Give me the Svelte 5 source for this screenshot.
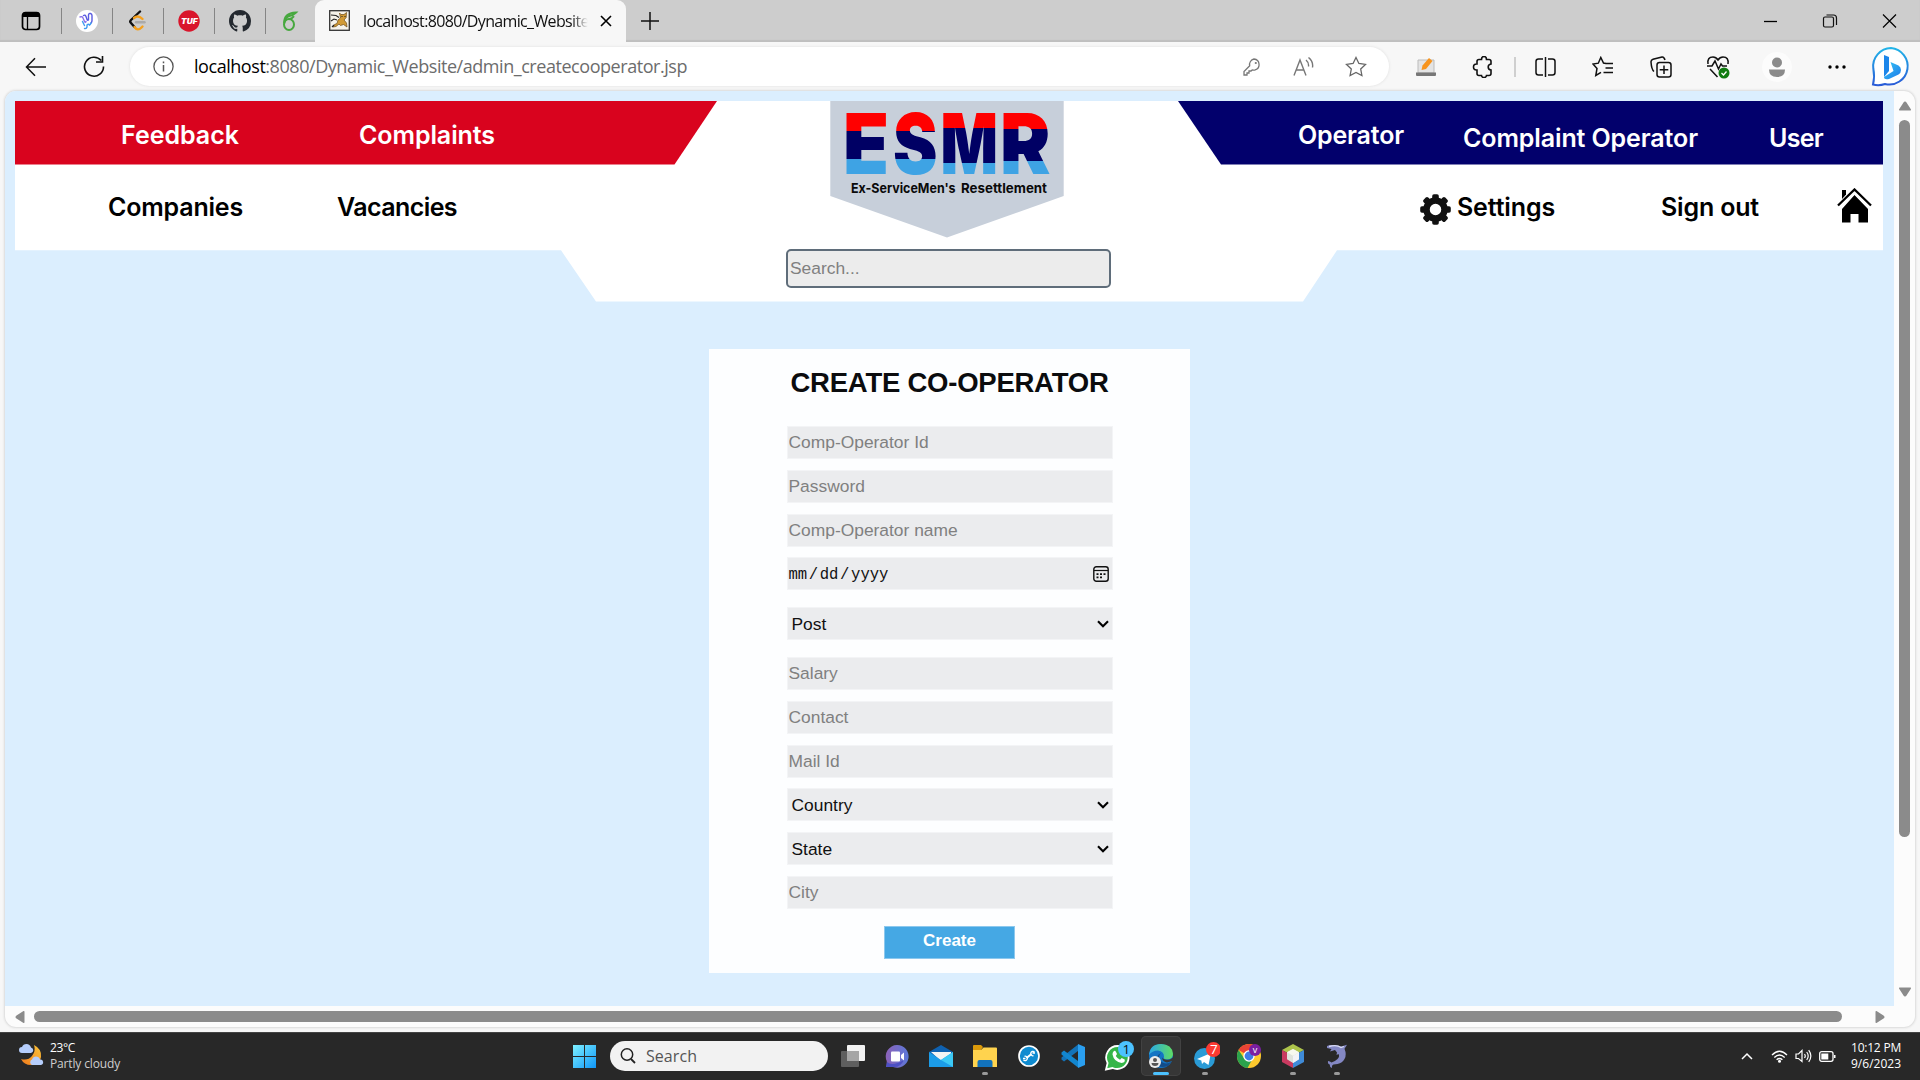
<script>
  // Spreads a label's letters so that its advance width is `width` pixels.
  function fit(node, width) {
    const natural = node.getBoundingClientRect().width;
    const count = node.textContent.length;
    node.style.letterSpacing = `${(width - natural) / count}px`;
  }

  const fields = [
    { kind: 'text', label: 'Comp-Operator Id' },
    { kind: 'text', label: 'Password' },
    { kind: 'text', label: 'Comp-Operator name' },
    { kind: 'date' },
    { kind: 'select', label: 'Post', spaced: true },
    { kind: 'text', label: 'Salary' },
    { kind: 'text', label: 'Contact' },
    { kind: 'text', label: 'Mail Id' },
    { kind: 'select', label: 'Country' },
    { kind: 'select', label: 'State' },
    { kind: 'text', label: 'City' }
  ];

  const letters = [
    { ch: 'E', x: 13, w: 46, a: 131.3, b: 158.7 },
    { ch: 'S', x: 63, w: 44.5, a: 131.3, b: 159.3 },
    { ch: 'M', x: 110.5, w: 57.5, a: 128.3, b: 162.7 },
    { ch: 'R', x: 170, w: 50.5, a: 129.3, b: 161 }
  ];
  const teeth = [0, 45, 90, 135, 180, 225, 270, 315];
</script>

<div class="screen">
  <div class="tabs">
    <div class="pin first">
      <svg width="20" height="20" viewBox="0 0 20 20"><rect x="1.5" y="1.5" width="17" height="17" rx="3" fill="none" stroke="#000" stroke-width="1.7"/><path d="M1.5 6V4a3 3 0 0 1 3-3h11a3 3 0 0 1 3 3v2z"/><path d="M6.5 6v12" stroke="#000" stroke-width="1.3"/></svg>
    </div>
    <div class="pin">
      <svg width="22" height="22" viewBox="0 0 22 22"><circle cx="11" cy="11" r="11" fill="#fff"/><g fill="none" stroke-width="1.400" stroke-linecap="round"><path d="M4 7q2-1 3 1l1.500 3.500q1 1.500 1.500 0" stroke="#8a72ea"/><path d="M7.500 5.500q1.500-1 2.500 1l1 3q1 1.500 1.500 0V5q.5-2 2-1.500T16 5.500v5q0 1.500-1 2.500" stroke="#5a5be0"/><path d="M6.500 11.500l2 4M8.500 18.500q2 .5 2.500-1.500v-2q1.500-1.500 2.500 0 1-.5 1.500-2" stroke="#3f9bef"/></g></svg>
    </div>
    <div class="pin">
      <svg width="22" height="22" viewBox="0 0 22 22"><g fill="none" stroke-width="2.400" stroke-linecap="round"><path d="M13 1.500 4 10q-1.500 1.500 0 3l3.500 4" stroke="#111"/><path d="M7.500 17q3 4.500 7 .5l1-1M7 8q4-3.500 8.500 1" stroke="#f5a01c"/><path d="M9 12.300h8.500" stroke="#aaa"/></g></svg>
    </div>
    <div class="pin">
      <svg width="22" height="22" viewBox="0 0 22 22"><circle cx="11" cy="11" r="10.700" fill="#d9152b"/><text x="3" y="13.500" textLength="16.500" lengthAdjust="spacingAndGlyphs" class="tuf">TUF</text></svg>
    </div>
    <div class="pin">
      <svg width="22" height="22" viewBox="0 0 16 16"><path fill="#24292f" d="M8 0C3.580 0 0 3.580 0 8c0 3.540 2.290 6.530 5.470 7.590.4.070.55-.17.55-.38 0-.19-.01-.82-.01-1.490-2.010.37-2.530-.49-2.690-.94-.09-.23-.48-.94-.82-1.130-.28-.15-.68-.52-.01-.53.63-.01 1.080.58 1.230.82.72 1.210 1.870.87 2.330.66.07-.52.28-.87.51-1.070-1.780-.2-3.640-.89-3.640-3.950 0-.87.31-1.590.82-2.150-.08-.2-.36-1.020.08-2.120 0 0 .67-.21 2.200.82.64-.18 1.320-.27 2-.27s1.360.09 2 .27c1.530-1.040 2.200-.82 2.200-.82.44 1.100.16 1.920.08 2.120.51.56.82 1.270.82 2.150 0 3.070-1.870 3.750-3.650 3.950.29.25.54.73.54 1.480 0 1.070-.01 1.930-.01 2.200 0 .21.15.46.55.38A8.010 8.010 0 0 0 16 8c0-4.420-3.580-8-8-8"/></svg>
    </div>
    <div class="pin last">
      <svg width="20" height="22" viewBox="0 0 20 22"><g fill="none" stroke="#47a83f" stroke-width="2"><ellipse cx="8" cy="14.500" rx="5" ry="5.500"/><path d="M3.200 13.500Q2.500 3 15 2.500q-3 3-6 3.200-5 1.300-5.800 7.800M8 9.300q3.500-.8 5-3"/></g></svg>
    </div>
    <div class="tab">
      <svg class="fav" width="21" height="21" viewBox="0 0 21 21"><rect x=".7" y=".7" width="19.600" height="19.600" fill="#f5f2ea" stroke="#333" stroke-width="1.300"/><path d="M10.500 3 12 4.500h3l2.500-2-.3 5L15 10l2.500 3 .5 4-3.500-2.500-3 1-1.500-1.500-3 2.500-3 .5 1.500-2.500 2.500-1L9 10l2.500-2z" fill="#d19a35" stroke="#6b4a18" stroke-width=".7"/><path d="M2 5l5 .5 3 2M2 11l3-2 3 1M3 17l2-2M12.500 6.500h1M15.500 6.500h1" stroke="#222" stroke-width="1.100" fill="none"/></svg>
      <div class="tabtitle"><span use:fit={231}>localhost:8080/Dynamic_Website/</span></div>
      <svg class="x" width="12" height="12" viewBox="0 0 12 12"><path d="M1 1l10 10M11 1 1 11" stroke="#000" stroke-width="1.600"/></svg>
    </div>
    <svg class="plus" width="18" height="18" viewBox="0 0 18 18"><path d="M9 0v18M0 9h18" stroke="#111" stroke-width="1.500"/></svg>
    <div class="winctl">
      <svg width="60" height="14" viewBox="0 0 60 14"><path d="M24 7.500h13" stroke="#000" stroke-width="1.300"/></svg>
      <svg width="60" height="14" viewBox="0 0 60 14"><g fill="none" stroke="#111" stroke-width="1.200"><rect x="23.500" y="3" width="10" height="10" rx="1.500"/><path d="M26.500 1h7q3 0 3 3v7"/></g></svg>
      <svg width="60" height="14" viewBox="0 0 60 14"><path d="M23 .5l13 13M36 .5l-13 13" stroke="#000" stroke-width="1.200"/></svg>
    </div>
  </div>

  <div class="toolbar">
    <div class="navslot"><svg width="22" height="20" viewBox="0 0 22 20"><path d="M21 10H1.500M10 1.300 1.500 10l8.500 8.700" fill="none" stroke="#111" stroke-width="1.500"/></svg></div>
    <div class="navslot"><svg width="22" height="22" viewBox="0 0 22 22"><path d="M20.500 10.500a9.500 9.500 0 1 1-2.300-6M19.500 0v6H13" fill="none" stroke="#111" stroke-width="1.600"/></svg></div>
    <div class="omni">
      <svg class="info" width="21" height="21" viewBox="0 0 21 21"><circle cx="10.500" cy="10.500" r="9.600" fill="none" stroke="#555" stroke-width="1.300"/><path d="M10.500 9v6.500M10.500 5.500v1.800" stroke="#555" stroke-width="1.500"/></svg>
      <div class="url"><span use:fit={493}><b>localhost</b>:8080/Dynamic_Website/admin_createcooperator.jsp</span></div>
      <div class="slot52"><svg width="18" height="18" viewBox="0 0 18 18"><path d="M11 1a5.600 5.600 0 0 1 1.200 10.900 6 6 0 0 1-3 0L8 13H6v2H4v2H1v-3.500l5.700-5.700A5.600 5.600 0 0 1 11 1z" fill="none" stroke="#777" stroke-width="1.300"/><circle cx="12.800" cy="5" r="1.100" fill="#777"/></svg></div>
      <div class="slot52"><svg width="22" height="20" viewBox="0 0 22 20"><path d="M1 18.500 7 3l6 15.500M3 13h8M13 3q3 2.500 2.500 6.500M15.500.5q5 4 4 10" fill="none" stroke="#777" stroke-width="1.400"/></svg></div>
      <div class="slot52"><svg width="22" height="22" viewBox="0 0 22 22"><path d="M11 1.500l2.900 6 6.600.9-4.800 4.600 1.200 6.500-5.900-3.100-5.900 3.100 1.200-6.500L1.500 8.400l6.600-.9z" fill="none" stroke="#666" stroke-width="1.300"/></svg></div>
    </div>
    <div class="tools">
      <div><svg width="22" height="20" viewBox="0 0 22 20"><path d="M3 3h16v13H3z" fill="#e4e4e4" stroke="#bbb"/><path d="M1 15.500h20V18q0 1-1 1H2q-1 0-1-1z" fill="#777"/><path d="M6.500 13l1-4.500L14 1l3.500 3-6.500 8z" fill="#f7941d"/></svg></div>
      <div><svg width="22" height="22" viewBox="0 0 22 22"><path d="M7 3.500h2.500q0-3 2.500-3t2.500 3H17q2 0 2 2V8q-2.800.3-2.800 3T19 14v3.500q0 2-2 2h-2.500q-.3 2-2.500 2t-2.500-2H7q-2 0-2-2V14q-3.500.3-3.500-3T5 8V5.500q0-2 2-2z" fill="none" stroke="#111" stroke-width="1.600"/></svg></div>
      <i></i>
      <div><svg width="21" height="20" viewBox="0 0 21 20"><path d="M8 2H3.500Q1 2 1 4.500v11Q1 18 3.500 18H8M13 2h4.500Q20 2 20 4.500v11q0 2.500-2.500 2.500H13M10.500 0v20" fill="none" stroke="#111" stroke-width="1.500"/></svg></div>
      <div><svg width="22" height="22" viewBox="0 0 22 22"><path d="M14 7.500 11.500 7 8.800 1.500l-2.500 5.700-5.300.9 4 4.400-1.200 7L9 16.300M12.500 7.500H21M13.500 12H21M11.500 16.500H21" fill="none" stroke="#111" stroke-width="1.500"/></svg></div>
      <div><svg width="22" height="22" viewBox="0 0 22 22"><path d="M4 15.500Q1.500 13.500 1 6q-.2-2 2-2.700L12 1q2-.4 3 3" fill="none" stroke="#111" stroke-width="1.500"/><rect x="7" y="6.500" width="14" height="14.500" rx="2.500" fill="#f7f7f7" stroke="#111" stroke-width="1.500"/><path d="M14 9.500v8.500M9.700 13.700h8.600" stroke="#111" stroke-width="1.500"/></svg></div>
      <div><svg width="24" height="24" viewBox="0 0 24 24"><path d="M2 9Q1 2 7 2q3 0 5 3 2-3 5-3 6 0 5 7M1 11h5l3-5 3.500 8 2.500-5 1.500 2H21M4 14l7.500 8" fill="none" stroke="#111" stroke-width="1.500"/><circle cx="18" cy="18" r="5.500" fill="#107c10"/><path d="M15.500 18l2 2 3-3.500" fill="none" stroke="#fff" stroke-width="1.300"/></svg></div>
      <div class="w60"><svg width="30" height="30" viewBox="0 0 30 30"><circle cx="15" cy="15" r="15" fill="#fcfcfc"/><circle cx="15" cy="10.500" r="5" fill="#8b8b8b"/><path d="M7 17.500h16q0 7.500-8 7.500t-8-7.500z" fill="#8b8b8b"/></svg></div>
      <div class="w60"><svg width="18" height="4" viewBox="0 0 18 4"><circle cx="2" cy="2" r="1.700"/><circle cx="9" cy="2" r="1.700"/><circle cx="16" cy="2" r="1.700"/></svg></div>
      <div class="w48"><svg width="40" height="42" viewBox="0 0 40 42">
        <defs><linearGradient id="ring" x1="0" y1="0" x2="0" y2="1"><stop offset="0" stop-color="#21b4e8"/><stop offset="1" stop-color="#2a5bd7"/></linearGradient><linearGradient id="bee" x1="0" y1="0" x2="1" y2="1"><stop offset="0" stop-color="#35c6f4"/><stop offset="1" stop-color="#1f7bea"/></linearGradient></defs>
        <path d="M20 2a18.300 18.300 0 1 1-6 36Q8 40 2 38.500q2-8 .3-16A18.300 18.300 0 0 1 20 2z" fill="#fff" stroke="url(#ring)" stroke-width="2"/><path d="M13 9l5 2v14l-5 6z" fill="#1c86ea"/><path d="M19.500 16l8 3.500q2.500 1.500 2.500 4.500 0 3-2.500 4.500L18 33q-5 1-5-2l9.500-6z" fill="url(#bee)"/></svg></div>
    </div>
  </div>

  <div class="view">
    <div class="page">
      <header>
        <svg class="shape" width="1868" height="201" viewBox="15 101 1868 201">
          <path d="M15 101H1883V250.300H1337L1303 301.500H596L561 250.300H15z" fill="#fff"/>
          <path d="M15 101H717L674.500 164.500H15z" fill="#d9031e"/>
          <path d="M1178 101H1883V164.500H1221z" fill="#02006c"/>
        </svg>
        <svg class="logo" width="234" height="137" viewBox="0 101 234 137">
          <defs>
            {#each letters as l}
              <linearGradient id={'g' + l.ch} gradientUnits="userSpaceOnUse" x1="0" y1="101" x2="0" y2="201">
                <stop offset={(l.a - 101) / 100} stop-color="#f00"/><stop offset={(l.a - 101) / 100} stop-color="#000064"/>
                <stop offset={(l.b - 101) / 100} stop-color="#000064"/><stop offset={(l.b - 101) / 100} stop-color="#3ea3e4"/>
              </linearGradient>
            {/each}
          </defs>
          <path d="M.3 101H233.700V196L117 237.500.3 196z" fill="#c7cfda"/>
          {#each letters as l}
            <text class="big" x={l.x} y="173.700" textLength={l.w} lengthAdjust="spacingAndGlyphs" fill={`url(#g${l.ch})`}>{l.ch}</text>
          {/each}
          <text class="tag" x="21" y="192.500" textLength="104.500" lengthAdjust="spacingAndGlyphs">Ex-ServiceMen's</text>
          <text class="tag" x="131" y="192.500" textLength="86" lengthAdjust="spacingAndGlyphs">Resettlement</text>
        </svg>
        <nav class="row top">
          <a class="n1"><span use:fit={118}>Feedback</span></a>
          <a class="n2"><span use:fit={136}>Complaints</span></a>
          <a class="n3"><span use:fit={106}>Operator</span></a>
          <a class="n4"><span use:fit={235}>Complaint Operator</span></a>
          <a class="n5"><span use:fit={54}>User</span></a>
        </nav>
        <nav class="row bottom">
          <a class="m1"><span use:fit={135}>Companies</span></a>
          <a class="m2"><span use:fit={120}>Vacancies</span></a>
          <svg class="gear" width="31" height="31" viewBox="-15.500 -15.500 31 31"><circle r="9" fill="none" stroke="#111" stroke-width="6.500"/>{#each teeth as t}<rect x="-3.300" y="-15.300" width="6.600" height="7" rx="1.800" fill="#111" transform={`rotate(${t})`}/>{/each}</svg>
          <a class="m3"><span use:fit={98}>Settings</span></a>
          <a class="m4"><span use:fit={98}>Sign out</span></a>
          <svg class="house" width="35" height="35" viewBox="0 0 35 35"><path d="M5 2h4v4.500L5 11z"/><path d="M17.500 7 31 21v13.500H21.500V26h-8v8.500H5V21z"/><path d="M1 17.500 17.500 1.500 34 17.500" fill="none" stroke="#000" stroke-width="2.300"/><path d="M3 19.700 17.500 5.500 32 19.700" fill="none" stroke="#fff" stroke-width="1.400"/></svg>
        </nav>
        <input class="search" placeholder="Search..." />
      </header>

      <form class="card">
        <h1><span use:fit={318}>CREATE CO-OPERATOR</span></h1>
        <div class="fields">
          {#each fields as f}
            {#if f.kind === 'text'}
              <input class="field" placeholder={f.label} />
            {:else if f.kind === 'date'}
              <div class="field date"><span>mm</span><span>/</span><span>dd</span><span>/</span><span>yyyy</span>
                <svg width="16" height="16" viewBox="0 0 16 16"><rect x=".8" y=".8" width="14.400" height="14.400" rx="2.500" fill="none" stroke="#111" stroke-width="1.400"/><path d="M1 4.500h14" stroke="#111" stroke-width="1.200"/><path d="M3.500 8.200h2M7 8.200h2M10.500 8.200h2M3.500 11.300h2M7 11.300h2" stroke="#111" stroke-width="1.800"/></svg>
              </div>
            {:else}
              <div class="field select" class:spaced={f.spaced}>{f.label}
                <svg width="12" height="8" viewBox="0 0 12 8"><path d="M1 1.300l5 5 5-5" fill="none" stroke="#000" stroke-width="2.100"/></svg>
              </div>
            {/if}
          {/each}
        </div>
        <button type="button">Create</button>
      </form>
    </div>

    <div class="vbar">
      <svg width="14" height="10" viewBox="0 0 14 10"><path d="M7 .5q1 0 1.500 1l4.500 7q.3 1-.7 1H1.700q-1 0-.7-1l4.500-7Q6 .5 7 .5z" fill="#8b8b8b"/></svg>
      <b></b>
      <svg width="14" height="10" viewBox="0 0 14 10"><path d="M7 9.500q1 0 1.500-1l4.500-7q.3-1-.7-1H1.700q-1 0-.7 1l4.500 7q.5 1 1.500 1z" fill="#8b8b8b"/></svg>
    </div>
    <div class="hbar">
      <svg width="10" height="14" viewBox="0 0 10 14"><path d="M.5 7q0-1 1-1.500l7-4.500q1-.3 1 .7v10.600q0 1-1 .7l-7-4.500Q.5 8 .5 7z" fill="#8b8b8b"/></svg>
      <b></b>
      <svg width="10" height="14" viewBox="0 0 10 14"><path d="M9.500 7q0-1-1-1.500l-7-4.500q-1-.3-1 .7v10.600q0 1 1 .7l7-4.500q1-.5 1-1.500z" fill="#8b8b8b"/></svg>
    </div>
  </div>

  <div class="taskbar">
    <svg class="weather" width="25" height="24" viewBox="0 0 25 24"><defs><linearGradient id="mo" x1="1" y1="0" x2="0" y2="1"><stop offset="0" stop-color="#fbc53a"/><stop offset="1" stop-color="#f07a1c"/></linearGradient></defs><path d="M15 2q8 4 7 12t-10 8q-7 0-10-6 7 2 11-3t2-11z" fill="url(#mo)"/><path d="M3 10a3 3 0 0 1 0-6Q4 1 7.500 1T12 4.500a2.800 2.800 0 0 1 0 5.500zM13 22a3 3 0 0 1 0-5.500q1-3 4-3t4 3a2.800 2.800 0 0 1 1 5.500z" fill="#b5cdfb"/></svg>
    <div class="wtext"><span use:fit={25}>23°C</span><span class="dim" use:fit={70}>Partly cloudy</span></div>
    <svg class="start" width="23" height="23" viewBox="0 0 23 23"><defs><linearGradient id="st" gradientUnits="userSpaceOnUse" x1="0" y1="0" x2="23" y2="23"><stop offset="0" stop-color="#7df0ff"/><stop offset="1" stop-color="#0f96f8"/></linearGradient></defs><path d="M0 0h11v11H0zM12 0h11v11H12zM0 12h11v11H0zM12 12h11v11H12z" fill="url(#st)"/></svg>
    <div class="tsearch"><svg width="16" height="16" viewBox="0 0 16 16"><circle cx="7" cy="6.500" r="5.700" fill="none" stroke="#222" stroke-width="1.500"/><path d="M11 11l4 4" stroke="#222" stroke-width="1.800"/></svg><span use:fit={51}>Search</span></div>
    <div class="apps">
      <div><svg width="26" height="26" viewBox="0 0 26 26"><rect x="7" y="2" width="18" height="16" rx="1" fill="#f2f2f2"/><rect x="1" y="8" width="18" height="16" rx="1" fill="#5f5f5f"/><rect x="7" y="8" width="12" height="10" fill="#a5a5a5"/></svg></div>
      <div><svg width="24" height="24" viewBox="0 0 24 24"><defs><linearGradient id="ch" x1="0" y1="0" x2="1" y2="0"><stop offset="0" stop-color="#8c62b8"/><stop offset="1" stop-color="#5c78d8"/></linearGradient></defs><path d="M12 1a11.400 11.400 0 1 1-4 22H1q1-2 .7-6A11.400 11.400 0 0 1 12 1z" fill="url(#ch)"/><path d="M2 18q5 5 17-2-4 8-11 7H1z" fill="#4d50c4"/><rect x="6" y="7.500" width="9" height="10" rx="1" fill="#fff"/><path d="M16 11l3-2.500v8L16 14z" fill="#fff"/></svg></div>
      <div><svg width="24" height="24" viewBox="0 0 24 24"><path d="M0 8 12 1l12 7v7H0z" fill="#0f61b0"/><path d="M2 8h20v7l-10 2z" fill="#f4f4f4"/><path d="M0 8l12 8 12-8v15H0z" fill="#1c9ce8"/><path d="M24 8v15L12 16z" fill="#3cc9f5"/></svg></div>
      <div class="run"><svg width="24" height="24" viewBox="0 0 24 24"><path d="M0 2q0-1 1-1h7l2 2-2 3H0z" fill="#dc9a0a"/><path d="M0 6h8l2.500-2.500H23q1 0 1 1V23H0z" fill="#ffd34e"/><path d="M4.500 23v-5q0-2 2-2h11q2 0 2 2v5z" fill="#1272bb"/></svg></div>
      <div><svg width="22" height="22" viewBox="0 0 22 22"><circle cx="11" cy="11" r="10" fill="#0f8bd0" stroke="#fff" stroke-width="1.700"/><path d="M8.500 13l5-4" stroke="#fff" stroke-width="2"/><path d="M5 13.500h2.500M5.500 14.800a2.200 2.200 0 1 0 1-3.500M17 8h-2.500M16.500 7a2.200 2.200 0 1 0-1 3.700" fill="none" stroke="#fff" stroke-width="1.300"/></svg></div>
      <div><svg width="24" height="24" viewBox="0 0 24 24"><path d="M17 .5V7L3 17.500.5 15.500v-2z" fill="#1373b9"/><path d="M17 23.500V17L3 6.500.5 8.500v2z" fill="#1286cf"/><path d="M17 0l7 3v18l-7 3z" fill="#2a9ff0"/></svg></div>
      <div><svg class="wa" width="30" height="30" viewBox="0 0 30 30"><path d="M14 5a11.500 11.500 0 1 1-5.500 22L2 28.500 3.600 22A11.500 11.500 0 0 1 14 5z" fill="#35b548" stroke="#fff" stroke-width="1.800"/><path d="M9.500 10.500q1.500-1.500 2.500.5l1 2-1.200 2q1.500 2.500 4.200 3.700l1.700-1.700 3 1.500q.7 3-3 3.500Q10 21 8.500 13.500q0-2 1-3z" fill="#fff"/><circle cx="22" cy="8" r="8" fill="#4cc2ff"/><text class="badge" x="18.500" y="13" fill="#111">1</text></svg></div>
      <div class="active"><svg width="26" height="26" viewBox="0 0 26 26"><defs><linearGradient id="ed" x1="0" y1="0" x2="1" y2="0"><stop offset="0" stop-color="#2aa7e8"/><stop offset="1" stop-color="#5fdc62"/></linearGradient></defs><circle cx="13" cy="13" r="12" fill="#1374c4"/><path d="M1 12Q2 1 13 1t12 10q0 5-6 5.500-4 0-3-3 0-5-6-6-6 0-9 4.500z" fill="url(#ed)"/><path d="M13 10q-4 4 0 8.500 5 4 10.500 0L20 23q-9 3-12-3-1-7 5-10z" fill="#134c88"/><path d="M14 14q1 3.500 8 2.500l3-2 1 3-7 2q-5-1-5-5.500z" fill="#383736"/><circle cx="7" cy="19" r="6" fill="#ececec"/><circle cx="7" cy="17" r="2" fill="#555"/><path d="M3.500 20h7q0 3-3.500 3t-3.500-3z" fill="#555"/></svg></div>
      <div class="run"><svg width="30" height="30" viewBox="0 0 30 30"><circle cx="14.500" cy="17.500" r="10.500" fill="#2a9bd6"/><path d="M7 18l14-6-2.500 12-4.500-3-2 2-.7-3.500z" fill="#fff"/><circle cx="23.500" cy="8.500" r="7.500" fill="#fb3a32"/><text class="badge" x="20" y="13" fill="#fff">7</text></svg></div>
      <div><svg width="26" height="26" viewBox="0 0 26 26"><circle cx="13" cy="13" r="12" fill="#fdc92e"/><path d="M13 13 2.600 7A12 12 0 0 1 23.500 7z" fill="#ea4335"/><path d="M2.600 7A12 12 0 0 0 11.500 25l5-9-8 0z" fill="#2ba24c"/><circle cx="13" cy="13" r="5.700" fill="#fff"/><circle cx="13" cy="13" r="4.400" fill="#3f7de8"/><circle cx="19" cy="7" r="6" fill="#7b1fa2"/><text class="vee" x="16.700" y="10">v</text></svg></div>
      <div class="run"><svg width="22" height="24" viewBox="0 0 22 24"><path d="M11 0l11 6-11 6L0 6z" fill="#adc44b"/><path d="M0 6l11 6v12L0 18z" fill="#c93a60"/><path d="M22 6l-11 6v12l11-6z" fill="#3f8bd8"/><path d="M11 5l6 3.300v7L11 19l-6-3.700v-7z" fill="#dfe3dc"/><path d="M5 8.300 11 5l6 3.300-6 3.500z" fill="#f7f8ee"/><path d="M11 12v7l6-3.700v-7z" fill="#f3f3f8"/></svg></div>
      <div class="run"><svg width="22" height="24" viewBox="0 0 22 24"><path d="M1 2q3-1.500 6-1 5 .2 8 1.500L21 .8l-2.500 4Q21 11 18.500 15q-2 4-7 5l-4 .5Q5.500 21 6 24q-2.500-1-2.300-3.500Q1.500 20 2 17q2 0 3.500 1.500Q9 17.500 11.500 15t1-5l-2 1 .5-2.500L9 6 4 7.500 5.500 5 1 4z" fill="#8488c4"/><path d="M3 2.500q8-2 12 1l3-1" stroke="#dadcf4" stroke-width="1.300" fill="none"/></svg></div>
    </div>
    <div class="tray">
      <svg width="12" height="8" viewBox="0 0 12 8"><path d="M1 7l5-5 5 5" fill="none" stroke="#fff" stroke-width="1.500"/></svg>
      <svg class="wifi" width="17" height="13" viewBox="0 0 17 13"><g fill="none" stroke="#fff" stroke-width="1.300"><path d="M1 5q7.500-7.500 15 0M3.300 7.500q5.200-5 10.400 0M5.600 9.800q2.900-2.600 5.800 0"/></g><circle cx="8.500" cy="11.300" r="1.500" fill="#fff"/></svg>
      <svg class="vol" width="17" height="14" viewBox="0 0 17 14"><path d="M1 5h2.500L7 1.500v11L3.500 9.500H1zM9.500 5q1.500 2 0 4M11.700 3q3 4 0 8M13.700 1.200q4.300 5.800 0 11.600" fill="none" stroke="#fff" stroke-width="1.200"/></svg>
      <svg class="bat" width="17" height="11" viewBox="0 0 17 11"><rect x=".7" y=".7" width="13.300" height="9.600" rx="2" fill="none" stroke="#fff" stroke-width="1.300"/><path d="M2.300 2.500h7v6h-7zM15 4h1.500v3H15z" fill="#fff"/></svg>
      <div class="clock"><span use:fit={50}>10:12 PM</span><span use:fit={50}>9/6/2023</span></div>
    </div>
  </div>
</div>

<style>
  :global(body) { margin: 0; overflow: hidden; }
  * { box-sizing: border-box; }
  svg { display: block; flex: none; }
  span { white-space: nowrap; display: inline-block; }
  .screen { width: 1920px; height: 1080px; background: #f7f7f7; display: flex; flex-direction: column; font-family: "Open Sans", "Noto Sans", sans-serif; overflow: hidden; }

  .tabs { height: 42px; background: #cdcdcd; display: flex; flex: none; align-items: center; box-shadow: inset 0 -2px 1px #bfbfbf; padding-bottom: 1px; }
  .pin { width: 51px; height: 26px; display: flex; align-items: center; justify-content: center; border-right: 1px solid #858585; }
  .first { width: 62px; }
  .last { width: 49px; border: 0; }
  .tab { width: 311px; height: 42px; margin-bottom: -1px; background: #f7f7f7; border-radius: 9px 9px 0 0; display: flex; align-items: center; padding: 0 0 1px 14px; }
  .tabtitle { width: 227px; margin-left: 13px; overflow: hidden; font-size: 16px; line-height: 24px; color: #111; -webkit-mask-image: linear-gradient(90deg, #000 92%, transparent 99%); mask-image: linear-gradient(90deg, #000 92%, transparent 99%); }
  .x { margin-left: 10px; }
  .plus { margin-left: 15px; }
  .winctl { margin-left: auto; display: flex; }

  .toolbar { height: 49px; flex: none; display: flex; align-items: center; padding-left: 7px; padding-right: 3px; }
  .navslot { width: 58px; display: flex; justify-content: center; }
  .omni { margin-left: 7px; width: 1259px; flex: none; height: 39px; border-radius: 20px; background: #fff; box-shadow: 0 0 3px #ddd; display: flex; align-items: center; padding: 0 7px 0 23px; }
  .url { margin-left: 20px; flex: 1; font-size: 18px; line-height: 26px; color: #6c6c6c; margin-top: -1px; }
  .url b { font-weight: 400; color: #000; }
  .slot52 { width: 52px; display: flex; justify-content: center; }
  .tools { flex: 1; padding-left: 8px; display: flex; align-items: center; }
  .tools div { width: 57.5px; display: flex; justify-content: center; }
  .tools i { width: 2px; height: 20px; background: #cfcfcf; margin: 0 1px 0 2px; }
  .tools .w60 { width: 60px; }
  .tools .w48 { width: 48px; }

  .view { width: 1910px; height: 936px; margin-left: 5px; flex: none; border-radius: 11px; overflow: hidden; background: #fcfcfc; display: grid; grid-template: 915px 21px / 1889px 21px; box-shadow: 0 0 3px #bbb; }
  .page { background: #dbeefe; padding: 10px 0 0 10px; overflow: hidden; }
  header { width: 1868px; height: 200px; position: relative; }
  .shape { position: absolute; left: 0; top: 0; }
  .logo { position: absolute; left: 815px; top: 0; }
  .big { font: 900 84px Inter, sans-serif; }
  .tag { font: 700 13.500px Inter, sans-serif; fill: #0a0a0a; }
  .row { position: relative; display: flex; align-items: center; font: 600 25px/30px Inter, sans-serif; }
  .row a { flex: none; }
  .top { height: 64px; color: #fff; padding-top: 3px; }
  .bottom { height: 84px; color: #000; }
  .n1 { width: 118px; margin-left: 106px; }
  .n2 { width: 136px; margin-left: 120px; }
  .n3 { width: 106px; margin-left: 803px; }
  .n4 { width: 235px; margin-left: 59px; padding-top: 6px; }
  .n5 { width: 54px; margin-left: 71px; padding-top: 6px; }
  .m1 { width: 135px; margin-left: 93px; }
  .m2 { width: 120px; margin-left: 94px; }
  .gear { margin: 4px 0 0 963px; }
  .m3 { width: 98px; margin-left: 6px; }
  .m4 { width: 98px; margin-left: 106px; }
  .house { margin: -3px 0 0 78px; }
  .search { position: relative; display: block; margin: 0 0 0 771px; width: 325px; height: 39px; border: 2px solid #5f6d7a; border-radius: 5px; background: #ececec; padding: 0 2px; font: 17.400px "Liberation Sans", Arial, sans-serif; }
  .search::placeholder, .field::placeholder { color: #808080; opacity: 1; }

  .card { width: 481px; height: 624px; margin: 48px 0 0 694px; background: #fdfeff; display: flex; flex-direction: column; align-items: center; }
  h1 { margin: 17px 0 0; font: 700 27.500px/34px "Liberation Sans", Arial, sans-serif; color: #0b0c0e; }
  .fields { width: 326px; margin-top: 26px; display: flex; flex-direction: column; gap: 10.750px; }
  .field { width: 326px; height: 33px; flex: none; border: 1px solid #f3f4f6; background: #ebecee; padding: 0 1px; font: 17.400px "Liberation Sans", Arial, sans-serif; color: #111; display: flex; align-items: center; border-radius: 0; }
  .select { padding: 1px 3px 0 4px; justify-content: space-between; }
  .spaced { margin: 6.200px 0; }
  .date { font: 15.600px "Liberation Mono", monospace; padding: 2px 3px 0 1px; }
  .date span { padding-right: 1.600px; }
  .date svg { margin: -1px 0 0 auto; }
  button { width: 131px; height: 33px; margin-top: 17px; border: 1px solid #8cc8ee; background: #45a8e4; color: #fff; font: 700 17px "Liberation Sans", Arial, sans-serif; padding: 0 0 2px; }

  .vbar { display: flex; flex-direction: column; align-items: center; padding: 10px 0 0; }
  .vbar b { width: 11px; height: 717px; border-radius: 6px; background: #8b8b8b; margin: 9px 0 150px; }
  .hbar { display: flex; align-items: center; padding-left: 10px; }
  .hbar b { width: 1808px; height: 11px; border-radius: 6px; background: #8b8b8b; margin: 0 33px 0 9px; }

  .taskbar { height: 48px; margin-top: auto; background: #282828; display: flex; align-items: center; color: #fff; flex: none; border-top: 1px solid #444; padding-bottom: 1px; }
  .weather { margin-left: 19px; margin-top: -3px; }
  .wtext { width: 90px; margin-left: 6px; font-size: 12px; line-height: 16px; display: flex; flex-direction: column; align-items: flex-start; }
  .dim { color: #cfcfcf; }
  .start { margin-left: 433px; }
  .tsearch { width: 218px; height: 30px; margin-left: 14px; background: #f2f2f2; border-radius: 15px; color: #555; display: flex; align-items: center; padding-left: 10px; font-size: 16px; }
  .tsearch span { margin-left: 10px; }
  .apps { display: flex; gap: 4px; margin-left: 5px; }
  .apps div { width: 40px; height: 40px; border-radius: 5px; display: flex; justify-content: center; align-items: center; position: relative; }
  .apps .active { background: #363636; box-shadow: inset 0 0 0 1px #424242; }
  .run::after, .active::after { content: ""; position: absolute; bottom: 1px; left: 17px; width: 6px; height: 3px; border-radius: 2px; background: #9a9a9a; }
  .active::after { left: 12px; width: 16px; background: #4cc2ff; }
  .wa { margin-left: 3px; }
  .badge { font: 13.500px "Open Sans", sans-serif; }
  .vee { font: 9px "Open Sans", sans-serif; fill: #fff; }
  .tuf { font: italic 900 7px Inter, sans-serif; fill: #fff; }
  .tray { margin-left: auto; display: flex; align-items: center; padding-right: 19px; }
  .wifi { margin-left: 18px; }
  .vol { margin-left: 7px; }
  .bat { margin-left: 7px; }
  .clock { width: 50px; margin-left: 15px; font-size: 12px; line-height: 16px; display: flex; flex-direction: column; align-items: flex-end; }
</style>
